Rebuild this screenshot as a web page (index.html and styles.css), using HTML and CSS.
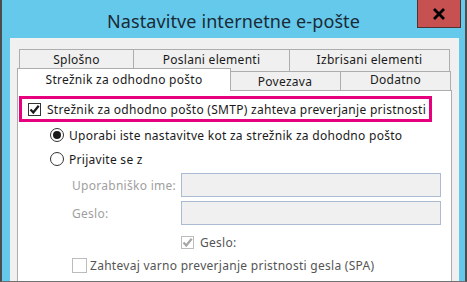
FILE: index.html
```html
<!DOCTYPE html>
<html lang="sl">
<head>
  <meta charset="UTF-8" />
  <title>Nastavitve internetne e-pošte</title>
  <link rel="stylesheet" href="styles.css">
</head>
<body>

<div class="window">
  <!-- Title bar -->
  <div class="titlebar">
    <div class="title">Nastavitve internetne e-pošte</div>
    <div class="close">
      <svg width="14" height="12" viewBox="0 0 14 12">
        <path d="M2 1 L12 11 M12 1 L2 11" stroke="#000" stroke-width="2.8" />
      </svg>
    </div>
  </div>

  <div class="panel">
    <!-- Tabs -->
    <div class="tab-row top">
      <div class="tab t-splosno">Splošno</div>
      <div class="tab t-poslani">Poslani elementi</div>
      <div class="tab t-izbrisani">Izbrisani elementi</div>
    </div>
    <div class="tab-row bottom">
      <div class="tab active">Strežnik za odhodno pošto</div>
      <div class="tab t-povezava">Povezava</div>
      <div class="tab t-dodatno">Dodatno</div>
    </div>

    <!-- Tab content -->
    <div class="content">
      <div class="highlight">
        <span class="check on"><svg width="11" height="11" viewBox="0 0 11 11"><path d="M1.5 5.5 L4.3 8.5 L9.7 1.8" fill="none" stroke="#1a1a1a" stroke-width="2.2" /></svg></span>
        <span>Strežnik za odhodno pošto (SMTP) zahteva preverjanje pristnosti</span>
      </div>

      <div class="option first">
        <span class="radio selected"></span>
        <span>Uporabi iste nastavitve kot za strežnik za dohodno pošto</span>
      </div>
      <div class="option">
        <span class="radio"></span>
        <span>Prijavite se z</span>
      </div>

      <div class="login-grid">
        <label class="muted">Uporabniško ime:</label>
        <div class="textbox"></div>
        <label class="muted">Geslo:</label>
        <div class="textbox"></div>
      </div>

      <div class="remember">
        <span class="check disabled"><svg width="11" height="11" viewBox="0 0 11 11"><path d="M1.5 5.5 L4.3 8.5 L9.7 1.8" fill="none" stroke="#a6a6a6" stroke-width="2.2" /></svg></span>
        <span>Geslo:</span>
      </div>
      <div class="spa">
        <span class="check empty"></span>
        <span>Zahtevaj varno preverjanje pristnosti gesla (SPA)</span>
      </div>
    </div>
  </div>
</div>

</body>
</html>
```

FILE: styles.css
```css
body {
  margin: 0;
  font-family: "Noto Sans", "DejaVu Sans", sans-serif;
  font-size: 12px;
  letter-spacing: 0.28px;
  color: #1a1a1a;
  background-color: #ffffff;
}

.window {
  width: 467px;
  height: 282px;
  box-sizing: border-box;
  background-color: #65c9eb;
  border-left: 2px solid #4d4d4d;
  border-right: 2px solid #4d4d4d;
  border-bottom: 1px solid #707070;
  display: flex;
  flex-direction: column;
  overflow: hidden;
}

/* Title bar */
.titlebar {
  height: 38px;
  flex-shrink: 0;
  display: flex;
  align-items: flex-start;
}

.title {
  flex: 1;
  text-align: center;
  padding-left: 48px;
  padding-top: 10px;
  font-size: 18px;
  letter-spacing: 0.1px;
  line-height: 22px;
  color: #1b2a36;
}

.close {
  width: 44px;
  height: 28px;
  margin-right: 4px;
  box-sizing: border-box;
  background-color: #c75050;
  border: 1px solid #4f3333;
  border-top: none;
  display: flex;
  align-items: center;
  justify-content: center;
}

/* Dialog body */
.panel {
  flex: 1;
  margin: 0 6px 0 8px;
  padding: 11px 7px 0 7px;
  background-color: #f0f0f0;
  display: flex;
  flex-direction: column;
  overflow: hidden;
}

.tab-row {
  display: flex;
  flex-shrink: 0;
}

.tab-row.top {
  height: 22px;
  margin-left: 2px;
}

.tab-row.bottom {
  height: 19px;
}

.tab {
  box-sizing: border-box;
  border: 1px solid #adadad;
  border-bottom: none;
  background-color: #f0f0f0;
  text-align: center;
  white-space: nowrap;
}

.tab-row.top .tab {
  height: 22px;
  line-height: 19px;
}

.t-splosno { width: 115px; }
.t-poslani { width: 157px; margin-left: -1px; }
.t-izbrisani { width: 161px; margin-left: -1px; }

.tab.active {
  width: 214px;
  height: 23px;
  margin-top: -3px;
  line-height: 22px;
  background-color: #ffffff;
  position: relative;
  z-index: 1;
}

.t-povezava {
  width: 112px;
  height: 19px;
  margin-left: -2px;
  line-height: 20px;
}

.t-dodatno {
  width: 111px;
  height: 19px;
  margin-left: -1px;
  line-height: 15px;
}

/* Content */
.content {
  flex-shrink: 0;
  height: 210px;
  background-color: #ffffff;
  border: 1px solid #adadad;
}

.highlight {
  margin: 5px 19px 0 1px;
  height: 20px;
  border: 3px solid #e6007e;
  padding-left: 6px;
  display: flex;
  align-items: center;
  gap: 6px;
}

.check {
  width: 13px;
  height: 13px;
  box-sizing: border-box;
  border: 1px solid #333333;
  background-color: #ffffff;
  display: flex;
  align-items: center;
  justify-content: center;
  flex-shrink: 0;
}

.check.disabled,
.check.empty {
  border-color: #bcbcbc;
}

.check.empty {
  width: 15px;
  height: 15px;
}

.option {
  height: 24px;
  margin-left: 32px;
  display: flex;
  align-items: center;
  gap: 5px;
}

.option.first {
  margin-top: 1px;
}

.radio {
  width: 14px;
  height: 14px;
  box-sizing: border-box;
  border: 1px solid #333333;
  border-radius: 50%;
  background-color: #ffffff;
  display: flex;
  align-items: center;
  justify-content: center;
}

.radio.selected::after {
  content: "";
  width: 8px;
  height: 8px;
  border-radius: 50%;
  background-color: #1a1a1a;
}

.login-grid {
  margin: 2px 0 0 54px;
  display: grid;
  grid-template-columns: 109px 260px;
  row-gap: 4px;
  align-items: center;
}

.muted {
  color: #a0a0a0;
}

.textbox {
  height: 24px;
  box-sizing: border-box;
  background-color: #f0f0f0;
  border: 1px solid #abbbd3;
}

.remember {
  margin: 9px 0 0 163px;
  display: flex;
  align-items: center;
  gap: 6px;
  color: #555555;
}

.spa {
  margin: 6px 0 0 54px;
  display: flex;
  align-items: center;
  gap: 3px;
  color: #555555;
}
```
